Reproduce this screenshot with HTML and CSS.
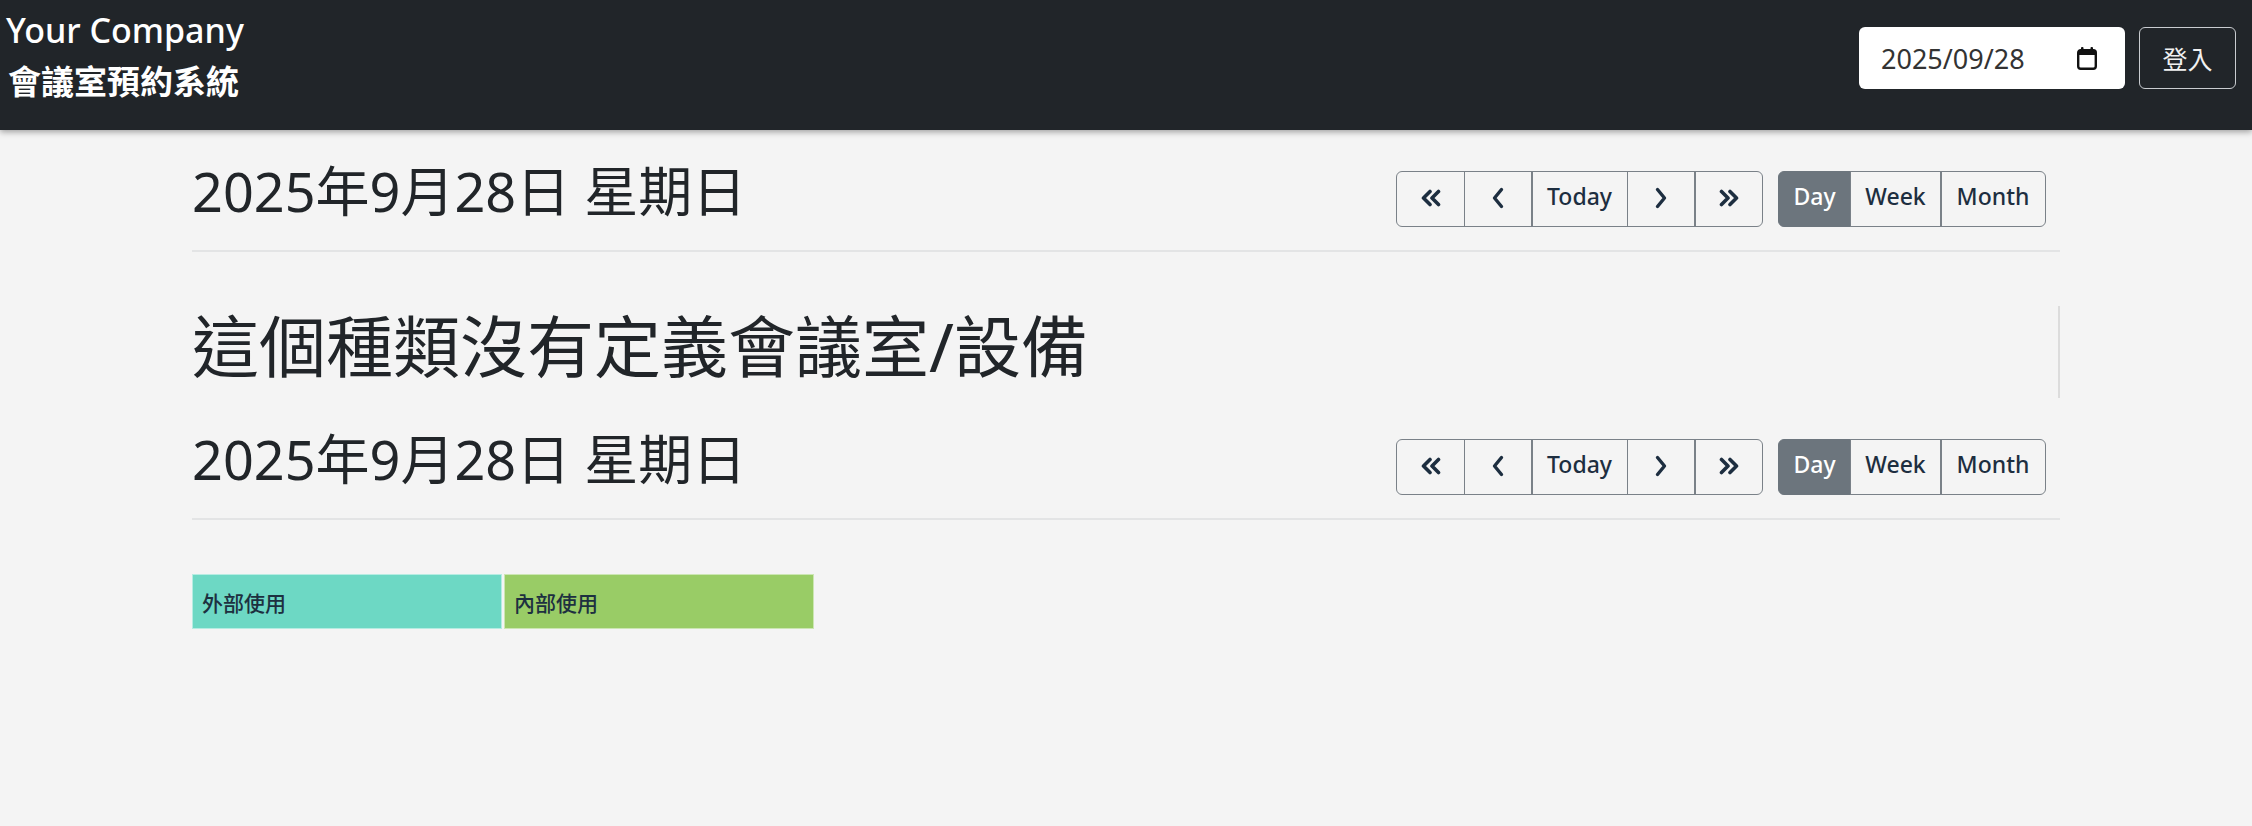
FILE: index.html
```html
<!DOCTYPE html>
<html lang="zh-Hant">
<head>
<meta charset="utf-8">
<title>會議室預約系統</title>
<link rel="stylesheet" href="styles.css">
</head>
<body>
<header class="navbar">
  <div class="brand">
    <div class="brand-name">Your Company</div>
    <div class="brand-sub">會議室預約系統</div>
  </div>
  <div class="nav-right">
    <div class="date-input">
      <span class="date-text">2025/09/28</span>
      <svg class="cal-icon" width="20" height="23" viewBox="0 0 20 23">
        <rect x="4" y="0" width="2.5" height="5" rx="1" fill="#111"/>
        <rect x="13.5" y="0" width="2.5" height="5" rx="1" fill="#111"/>
        <rect x="1.2" y="3.2" width="17.6" height="18.6" rx="2.5" fill="none" stroke="#111" stroke-width="2.4"/>
        <rect x="1.2" y="3.2" width="17.6" height="4.8" fill="#111"/>
      </svg>
    </div>
    <button class="btn-login">登入</button>
  </div>
</header>

<main class="container">
  <div class="cal-header">
    <h2 class="cal-title">2025年9月28日 星期日</h2>
    <div class="toolbar">
      <div class="btn-group">
        <button class="btn btn-icon"><svg width="24" height="18" viewBox="0 0 24 18"><polyline points="11,2.5 4.5,9 11,15.5" fill="none" stroke="#1d2e40" stroke-width="3.6" stroke-linecap="round" stroke-linejoin="round"/><polyline points="19.5,2.5 13,9 19.5,15.5" fill="none" stroke="#1d2e40" stroke-width="3.6" stroke-linecap="round" stroke-linejoin="round"/></svg></button>
        <button class="btn btn-icon"><svg width="14" height="22" viewBox="0 0 14 22"><polyline points="10.5,2.5 3.5,11 10.5,19.5" fill="none" stroke="#1d2e40" stroke-width="3.4" stroke-linecap="round" stroke-linejoin="round"/></svg></button>
        <button class="btn btn-text btn-today">Today</button>
        <button class="btn btn-icon"><svg width="14" height="22" viewBox="0 0 14 22"><polyline points="3.5,2.5 10.5,11 3.5,19.5" fill="none" stroke="#1d2e40" stroke-width="3.4" stroke-linecap="round" stroke-linejoin="round"/></svg></button>
        <button class="btn btn-icon"><svg width="24" height="18" viewBox="0 0 24 18"><polyline points="4.5,2.5 11,9 4.5,15.5" fill="none" stroke="#1d2e40" stroke-width="3.6" stroke-linecap="round" stroke-linejoin="round"/><polyline points="13,2.5 19.5,9 13,15.5" fill="none" stroke="#1d2e40" stroke-width="3.6" stroke-linecap="round" stroke-linejoin="round"/></svg></button>
      </div>
      <div class="btn-group">
        <button class="btn btn-text btn-day active">Day</button>
        <button class="btn btn-text btn-week">Week</button>
        <button class="btn btn-text btn-month">Month</button>
      </div>
    </div>
  </div>

  <div class="notice">
    <h1 class="notice-title">這個種類沒有定義會議室/設備</h1>
  </div>

  <div class="cal-header">
    <h2 class="cal-title">2025年9月28日 星期日</h2>
    <div class="toolbar">
      <div class="btn-group">
        <button class="btn btn-icon"><svg width="24" height="18" viewBox="0 0 24 18"><polyline points="11,2.5 4.5,9 11,15.5" fill="none" stroke="#1d2e40" stroke-width="3.6" stroke-linecap="round" stroke-linejoin="round"/><polyline points="19.5,2.5 13,9 19.5,15.5" fill="none" stroke="#1d2e40" stroke-width="3.6" stroke-linecap="round" stroke-linejoin="round"/></svg></button>
        <button class="btn btn-icon"><svg width="14" height="22" viewBox="0 0 14 22"><polyline points="10.5,2.5 3.5,11 10.5,19.5" fill="none" stroke="#1d2e40" stroke-width="3.4" stroke-linecap="round" stroke-linejoin="round"/></svg></button>
        <button class="btn btn-text btn-today">Today</button>
        <button class="btn btn-icon"><svg width="14" height="22" viewBox="0 0 14 22"><polyline points="3.5,2.5 10.5,11 3.5,19.5" fill="none" stroke="#1d2e40" stroke-width="3.4" stroke-linecap="round" stroke-linejoin="round"/></svg></button>
        <button class="btn btn-icon"><svg width="24" height="18" viewBox="0 0 24 18"><polyline points="4.5,2.5 11,9 4.5,15.5" fill="none" stroke="#1d2e40" stroke-width="3.6" stroke-linecap="round" stroke-linejoin="round"/><polyline points="13,2.5 19.5,9 13,15.5" fill="none" stroke="#1d2e40" stroke-width="3.6" stroke-linecap="round" stroke-linejoin="round"/></svg></button>
      </div>
      <div class="btn-group">
        <button class="btn btn-text btn-day active">Day</button>
        <button class="btn btn-text btn-week">Week</button>
        <button class="btn btn-text btn-month">Month</button>
      </div>
    </div>
  </div>

  <div class="legend">
    <div class="legend-item legend-external">外部使用</div>
    <div class="legend-item legend-internal">內部使用</div>
  </div>
</main>
</body>
</html>
```

FILE: styles.css
```css
* { box-sizing: border-box; }

html, body {
  margin: 0;
  padding: 0;
}

body {
  background: #f4f4f4;
  font-family: "Noto Sans", "Noto Sans CJK TC", sans-serif;
  color: #212529;
}

.navbar {
  height: 130px;
  background: #212529;
  display: flex;
  justify-content: space-between;
  align-items: flex-start;
  padding: 0 16px 0 6px;
  box-shadow: 0 2px 6px rgba(0, 0, 0, 0.35);
  position: relative;
  z-index: 1;
}

.brand {
  color: #fff;
  padding-top: 10px;
}

.brand-name {
  font-size: 34px;
  line-height: 40px;
  font-weight: 500;
}

.brand-sub {
  font-family: "Noto Sans CJK TC", sans-serif;
  font-size: 33px;
  line-height: 40px;
  font-weight: 700;
  margin-top: 10px;
  padding-left: 2px;
}

.nav-right {
  display: flex;
  gap: 14px;
  margin-top: 27px;
}

.date-input {
  width: 266px;
  height: 62px;
  background: #fff;
  border-radius: 6px;
  display: flex;
  align-items: center;
  justify-content: space-between;
  padding: 0 28px 0 22px;
}

.date-text {
  font-size: 27px;
  color: #333;
}

.cal-icon {
  display: block;
  margin-top: 1px;
}

.btn-login {
  width: 97px;
  height: 62px;
  background: transparent;
  border: 1.5px solid #c9ccd0;
  border-radius: 6px;
  color: #f1f1f1;
  font-family: "Noto Sans CJK TC", sans-serif;
  font-size: 25px;
  padding: 0;
}

.container {
  width: 1868px;
  margin: 0 auto;
}

.cal-header {
  display: flex;
  justify-content: space-between;
  align-items: center;
  padding: 41px 0 23px;
  border-bottom: 2px solid #e3e4e5;
}

.cal-title {
  margin: -8px 0 8px;
  font-size: 54px;
  font-weight: 400;
  line-height: 56px;
  color: #212529;
}

.toolbar {
  display: flex;
  gap: 15px;
  margin-right: 14px;
}

.btn-group {
  display: flex;
}

.btn {
  height: 56px;
  background: transparent;
  border: 1.5px solid #7a8188;
  margin-left: -1.5px;
  color: #1d2e40;
  font-family: "Noto Sans", sans-serif;
  font-size: 23px;
  font-weight: 500;
  display: flex;
  align-items: center;
  justify-content: center;
  padding: 0 0 6px;
}

.btn:first-child {
  margin-left: 0;
  border-radius: 6px 0 0 6px;
}

.btn:last-child {
  border-radius: 0 6px 6px 0;
}

.btn-icon { width: 69px; padding: 0 0 2px; }
.btn-today { width: 97px; }
.btn-day { width: 73px; }
.btn-week { width: 92px; }
.btn-month { width: 106px; }

.btn svg { display: block; }

.btn.active {
  background: #6c757d;
  border-color: #6c757d;
  color: #fff;
}

.notice {
  margin-top: 54px;
  height: 92px;
  border-right: 2px solid #dcdcdc;
  display: flex;
  align-items: center;
}

.notice-title {
  margin: 0 0 12px;
  font-family: "Noto Sans", "Noto Sans CJK TC", sans-serif;
  font-size: 67px;
  font-weight: 400;
  line-height: 80px;
  color: #212529;
}

.legend {
  display: flex;
  gap: 2px;
  margin-top: 54px;
}

.legend-item {
  width: 310px;
  height: 55px;
  display: flex;
  align-items: center;
  padding-left: 9px;
  font-family: "Noto Sans CJK TC", sans-serif;
  font-size: 21px;
  font-weight: 500;
  color: #1d3040;
  border: 1px solid rgba(255, 255, 255, 0.5);
}

.legend-external { background: #6dd8c4; }
.legend-internal { background: #99cc66; }
```
